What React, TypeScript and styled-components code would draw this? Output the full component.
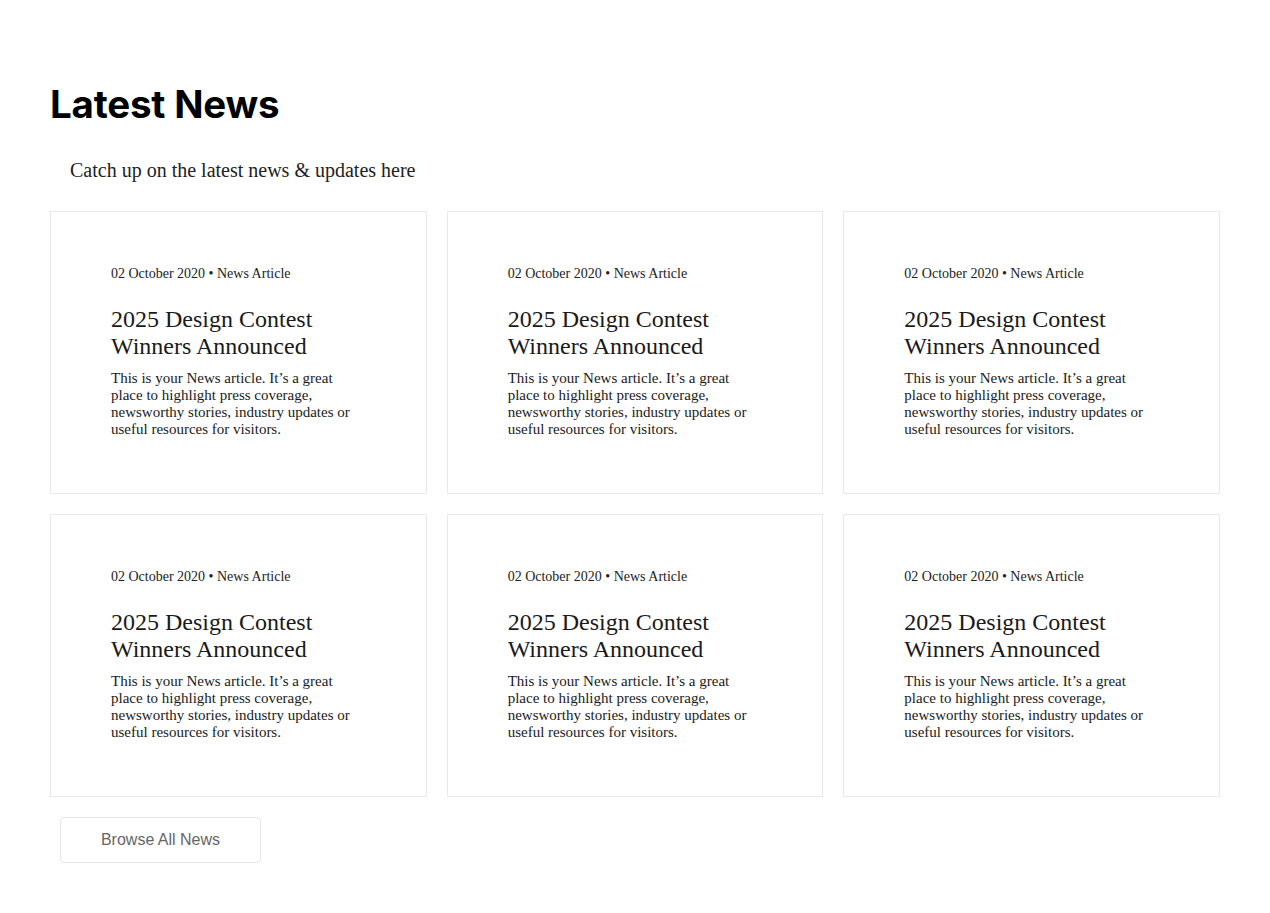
import styled, { createGlobalStyle } from 'styled-components';

const GlobalStyle = createGlobalStyle`
  body {
    margin: 0;
    background: #fff;
    font-family: "Liberation Serif", "Times New Roman", serif;
    color: #111;
  }
`;

const Page = styled.section`
  padding: 80px 50px 50px;
  width: 1170px;
`;

const Heading = styled.h1`
  margin: 0;
  font-family: Inter, "Noto Sans", sans-serif;
  font-weight: 700;
  font-size: 38.5px;
  line-height: 48px;
  letter-spacing: -0.2px;
  color: #000;
`;

const Subtitle = styled.p`
  margin: 31px 0 30px;
  padding-left: 20px;
  font-size: 20px;
  line-height: 22px;
  color: #222;
`;

const Grid = styled.div`
  display: grid;
  grid-template-columns: repeat(3, 1fr);
  gap: 20px;
`;

const Card = styled.article`
  border: 1px solid #e8e8e8;
  padding: 54px 60px 55px;
`;

const Meta = styled.div`
  font-size: 14px;
  line-height: 15px;
  color: #222;
`;

const Title = styled.h2`
  margin: 25px 0 10px;
  width: 250px;
  font-weight: 400;
  font-size: 24px;
  line-height: 27px;
  color: #1a1a1a;
`;

const Body = styled.p`
  margin: 0;
  width: 250px;
  font-size: 15px;
  line-height: 17px;
  color: #1a1a1a;
`;

const BrowseButton = styled.button`
  margin: 20px 0 0 10px;
  width: 201px;
  height: 46px;
  background: #fff;
  border: 1px solid #e6e6e6;
  border-radius: 4px;
  font-family: "Liberation Sans", Arial, sans-serif;
  font-size: 16px;
  color: #666;
  cursor: pointer;
`;

const articles = Array.from({ length: 6 }, (_, i) => ({
  id: i,
  date: '02 October 2020',
  kind: 'News Article',
  title: '2025 Design Contest Winners Announced',
  text: 'This is your News article. It\u2019s a great place to highlight press coverage, newsworthy stories, industry updates or useful resources for visitors.',
}));

function App() {
  return (
    <>
      <GlobalStyle />
      <Page>
        <Heading>Latest News</Heading>
        <Subtitle>Catch up on the latest news &amp; updates here</Subtitle>
        <Grid>
          {articles.map((a) => (
            <Card key={a.id}>
              <Meta>{a.date} • {a.kind}</Meta>
              <Title>{a.title}</Title>
              <Body>{a.text}</Body>
            </Card>
          ))}
        </Grid>
        <BrowseButton>Browse All News</BrowseButton>
      </Page>
    </>
  );
}

export default App;
